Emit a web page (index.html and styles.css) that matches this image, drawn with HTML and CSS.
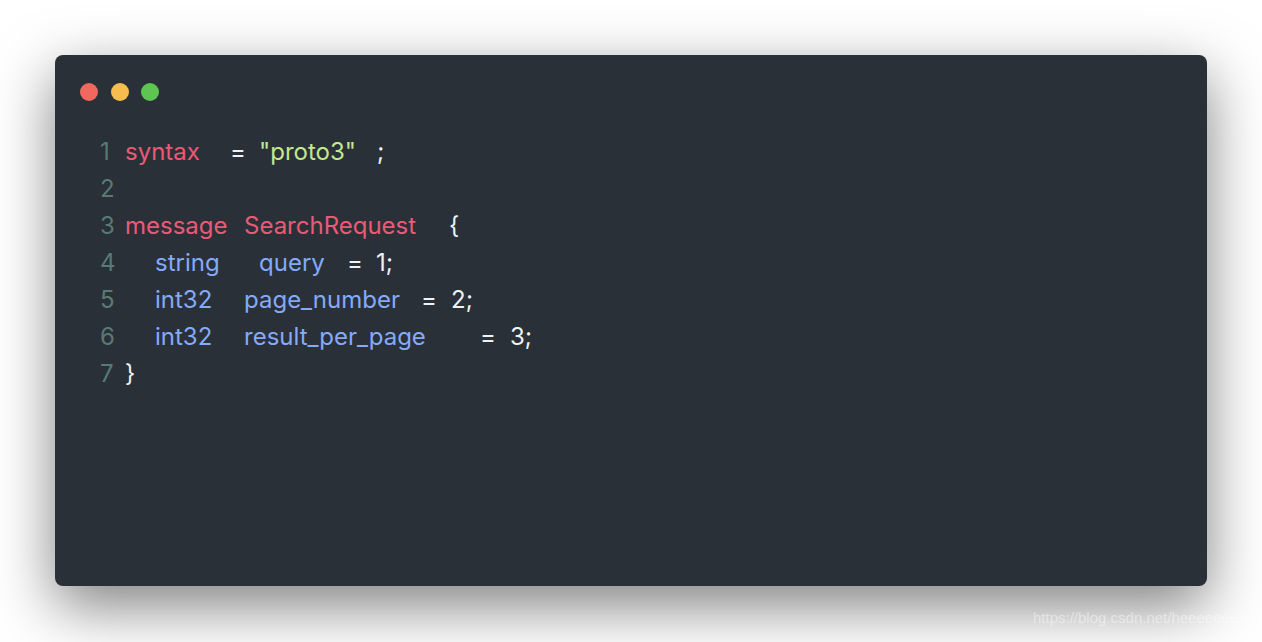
FILE: index.html
```html
<!DOCTYPE html>
<html>
<head>
<meta charset="utf-8">
<link rel="stylesheet" href="styles.css">
</head>
<body>
<div class="page">
  <div class="window">
    <div class="controls">
      <span class="dot red"></span>
      <span class="dot yellow"></span>
      <span class="dot green"></span>
    </div>
    <div class="code">
      <div class="line"><span class="ln">1</span><span class="tok kw w105">syntax</span><span class="tok op w29">=</span><span class="tok str w118">"proto3"</span><span class="tok op">;</span></div>
      <div class="line"><span class="ln">2</span></div>
      <div class="line"><span class="ln">3</span><span class="tok kw w119">message</span><span class="tok kw w205">SearchRequest</span><span class="tok op">{</span></div>
      <div class="line"><span class="ln">4</span><span class="indent"></span><span class="tok ty w104">string</span><span class="tok ty w88">query</span><span class="tok op w29">=</span><span class="tok op">1;</span></div>
      <div class="line"><span class="ln">5</span><span class="indent"></span><span class="tok ty w89">int32</span><span class="tok ty w177">page_number</span><span class="tok op w30">=</span><span class="tok op">2;</span></div>
      <div class="line"><span class="ln">6</span><span class="indent"></span><span class="tok ty w89">int32</span><span class="tok ty w236">result_per_page</span><span class="tok op w30">=</span><span class="tok op">3;</span></div>
      <div class="line"><span class="ln">7</span><span class="tok op">}</span></div>
    </div>
  </div>
  <div class="watermark">https://blog.csdn.net/heeeeeeer</div>
</div>
</body>
</html>
```
FILE: styles.css
```css
html, body {
  margin: 0;
  padding: 0;
  background: #ffffff;
}
.page {
  width: 1262px;
  height: 642px;
  padding: 55px 0 0 55px;
  box-sizing: border-box;
  position: relative;
  overflow: hidden;
}
.window {
  width: 1152px;
  height: 531px;
  box-sizing: border-box;
  background: #2a3038;
  border-radius: 8px;
  box-shadow: 0 20px 60px rgba(0, 0, 0, 0.5);
  padding: 28px 0 0 25px;
}
.controls {
  display: flex;
  gap: 12.5px;
  height: 18px;
}
.dot {
  width: 18px;
  height: 18px;
  border-radius: 50%;
  display: block;
}
.red { background: #f0685e; }
.yellow { background: #f6bd4e; }
.green { background: #5ec452; }
.code {
  margin-top: 32px;
  padding-left: 20px;
  font-family: Inter, "Liberation Sans", sans-serif;
  font-size: 24px;
  line-height: 37px;
  color: #eef3f5;
}
.line {
  display: flex;
  align-items: baseline;
  height: 37px;
  white-space: pre;
}
.ln {
  width: 25px;
  color: #587a74;
  flex: none;
}
.indent { width: 30px; flex: none; }
.tok { display: inline-block; flex: none; }
.kw { color: #ea5a76; }
.str { color: #c3e88d; }
.ty { color: #84aaf8; }
.op { color: #eef3f5; }
.w29 { width: 29px; }
.w30 { width: 30px; }
.w88 { width: 88px; }
.w89 { width: 89px; }
.w104 { width: 104px; }
.w105 { width: 105px; }
.w118 { width: 118px; }
.w119 { width: 119px; }
.w177 { width: 177px; }
.w205 { width: 205px; }
.w236 { width: 236px; }
.watermark {
  position: absolute;
  left: 1033px;
  top: 609px;
  font-family: "Liberation Sans", sans-serif;
  font-size: 15px;
  color: rgba(255, 255, 255, 0.45);
}
```
